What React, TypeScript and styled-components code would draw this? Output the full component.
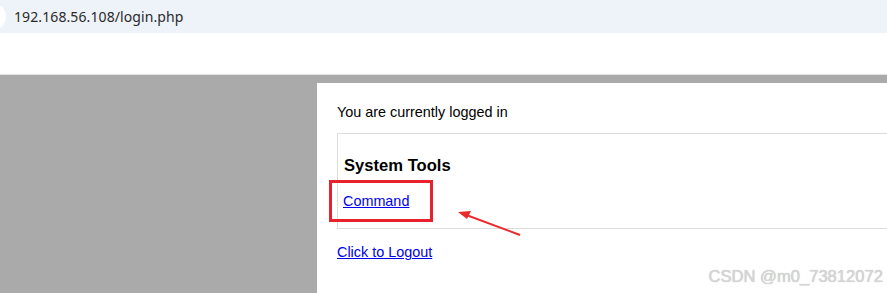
import React from "react";
import styled, { createGlobalStyle } from "styled-components";

const Global = createGlobalStyle`
  html, body { margin: 0; padding: 0; background: #ffffff; }
  body { font-family: "Liberation Sans", Arial, sans-serif; overflow: hidden; }
`;

const Page = styled.div`
  width: 887px;
  height: 293px;
  display: flex;
  flex-direction: column;
  position: relative;
  overflow: hidden;
`;

const AddressBar = styled.div`
  height: 33px;
  background: #eef2f9;
  display: flex;
  align-items: center;
  position: relative;
`;

const SiteDot = styled.span`
  position: absolute;
  left: -12px;
  top: 5px;
  width: 18px;
  height: 23px;
  border-radius: 50%;
  background: #ffffff;
`;

const Url = styled.span`
  margin-left: 14px;
  font-family: "Noto Sans", "Liberation Sans", sans-serif;
  font-size: 14px;
  color: #2a2a2a;
  letter-spacing: 0.1px;
`;

const Toolbar = styled.div`
  height: 41px;
  background: #ffffff;
  border-bottom: 1px solid #e2e2e2;
`;

const Viewport = styled.div`
  flex: 1;
  background: #aaaaaa;
  padding: 8px 0 0 317px;
  display: flex;
`;

const Panel = styled.div`
  flex: 1;
  background: #ffffff;
  padding: 21px 0 0 20px;
  position: relative;
`;

const Line = styled.p`
  margin: 0;
  font-size: 14.4px;
  line-height: 16px;
  color: #000;
`;

const ToolsBox = styled.div`
  margin-top: 13px;
  border: 1px solid #dddddd;
  border-right: none;
  padding: 22px 0 0 6px;
  height: 96px;
  box-sizing: border-box;
`;

const Heading = styled.h3`
  margin: 0;
  font-size: 16.6px;
  font-weight: bold;
  line-height: 20px;
  color: #000;
`;

const Link = styled.a<{ $mt?: number; $ml?: number }>`
  color: #0000ee;
  text-decoration: underline;
  font-size: 14.4px;
  line-height: 16px;
  display: inline-block;
  margin-top: ${(p) => p.$mt ?? 0}px;
  margin-left: ${(p) => p.$ml ?? 0}px;
`;

const Highlight = styled.div`
  position: absolute;
  left: 12px;
  top: 97px;
  width: 98px;
  height: 36px;
  border: 3px solid #e8212c;
  pointer-events: none;
`;

const Arrow = styled.svg`
  position: absolute;
  left: 130px;
  top: 118px;
  overflow: visible;
  pointer-events: none;
`;

const Watermark = styled.div`
  position: absolute;
  right: 4px;
  bottom: 6px;
  font-family: "Liberation Sans", Arial, sans-serif;
  font-size: 16.6px;
  color: #d6d6d6;
  text-shadow: 0 0 1px #b4b4b4;
`;

export default function App() {
  return (
    <Page>
      <Global />
      <AddressBar>
        <SiteDot />
        <Url>192.168.56.108/login.php</Url>
      </AddressBar>
      <Toolbar />
      <Viewport>
        <Panel>
          <Line>You are currently logged in</Line>
          <ToolsBox>
            <Heading>System Tools</Heading>
            <Link href="#" $mt={17} $ml={-1}>Command</Link>
          </ToolsBox>
          <Link href="#" $mt={15}>Click to Logout</Link>
          <Highlight />
          <Arrow width="70" height="30" viewBox="0 0 70 30">
            <path d="M 73 34 L 14 12" stroke="#ea2a2a" strokeWidth="2" fill="none" />
            <polygon points="11,11 24,10 20,18" fill="#ea2a2a" />
          </Arrow>
        </Panel>
      </Viewport>
      <Watermark>CSDN @m0_73812072</Watermark>
    </Page>
  );
}
